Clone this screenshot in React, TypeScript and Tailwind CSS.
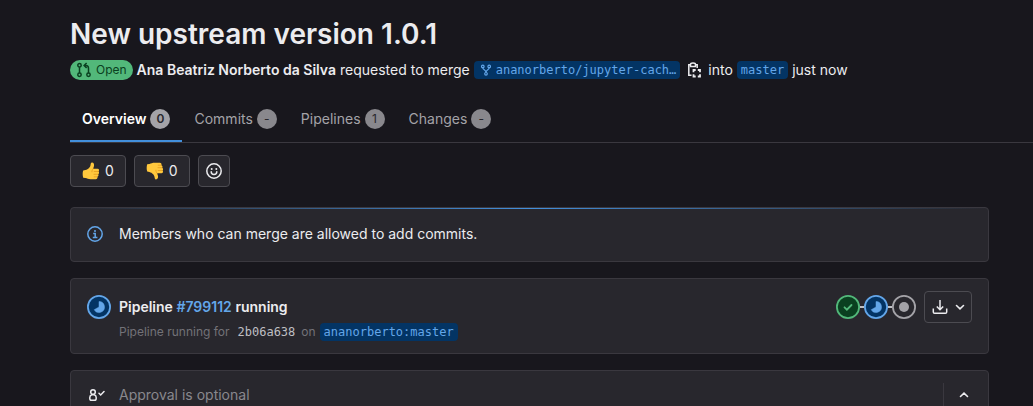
import type { ReactNode } from 'react';

type Tab = { label: string; count: string; active?: boolean };

const tabs: Tab[] = [
  { label: 'Overview', count: '0', active: true },
  { label: 'Commits', count: '-' },
  { label: 'Pipelines', count: '1' },
  { label: 'Changes', count: '-' },
];

function ThumbIcon({ down = false }: { down?: boolean }) {
  return (
    <svg viewBox="0 0 18 18" className={down ? 'size-[18px] -scale-y-100' : 'size-[18px]'} aria-hidden="true">
      <path
        d="M1.2 8.6C2.6 8.1 4.300 7.900 5.400 7.300C7 6.200 8.200 4.800 8.500 3.200C8.700 1.900 8.800.5 10 .5C11.700.5 12.300 2.200 12 3.900C11.800 5 11.300 6 11 6.800H15.600C17.300 6.800 17.600 9 16.300 9.500C17.500 10 17.300 12 16 12.300C16.900 13 16.500 14.600 15.300 14.800C15.900 15.800 15.200 17.200 13.800 17.200H8.500C6.500 17.200 5 16.500 3.500 16.100L1.200 15.800C.5 13.500.5 10.500 1.200 8.600Z"
        fill="#ffc83d"
      />
      <path
        d="M11 6.800C10.300 7.900 9.800 8.800 9.900 9.800M16.300 9.500H12.200M16 12.300H12M15.300 14.800H12.200"
        fill="none"
        stroke="#e39b1d"
        strokeWidth="0.8"
        strokeLinecap="round"
      />
    </svg>
  );
}

function SmileyIcon() {
  return (
    <svg viewBox="0 0 16 16" className="size-4" fill="none" stroke="currentColor" strokeWidth="1.5" aria-hidden="true">
      <circle cx="8" cy="8" r="7.200" />
      <path d="M5.200 8.800C5.200 12.400 10.800 12.400 10.800 8.800" strokeLinecap="round" />
      <circle cx="5.700" cy="5.900" r="1" fill="currentColor" stroke="none" />
      <circle cx="10.300" cy="5.900" r="1" fill="currentColor" stroke="none" />
    </svg>
  );
}

function MergeRequestIcon() {
  return (
    <svg viewBox="0 0 16 16" className="size-4" fill="none" stroke="currentColor" strokeWidth="1.5" aria-hidden="true">
      <circle cx="3.500" cy="3.200" r="1.700" />
      <circle cx="3.500" cy="12.800" r="1.700" />
      <circle cx="12.500" cy="12.800" r="1.700" />
      <path d="M3.500 5V11M12.500 11V6.500Q12.500 3.500 10 3.500H8.500M10.600 1L8.100 3.500L10.600 6" />
    </svg>
  );
}

function ForkIcon() {
  return (
    <svg viewBox="0 0 12 12" className="size-3" fill="none" stroke="currentColor" strokeWidth="1.200" aria-hidden="true">
      <circle cx="2.800" cy="2.400" r="1.300" />
      <circle cx="9.200" cy="2.400" r="1.300" />
      <circle cx="6" cy="9.800" r="1.300" />
      <path d="M2.800 3.700C2.800 6 6 5.400 6 8.500M9.200 3.700C9.200 6 6 5.400 6 8.500" />
    </svg>
  );
}

function CopyIcon() {
  return (
    <svg viewBox="0 0 16 16" className="size-4" fill="none" stroke="currentColor" strokeWidth="1.500" aria-hidden="true">
      <path d="M4.500 2.800H2.800V13.200H5.500M9.500 2.800H11.200V6" />
      <path d="M4.500 4.500V2.500Q4.500 1 7 1Q9.500 1 9.500 2.500V4.500Z" />
      <path d="M9.700 8H7.500V10.200M11.800 8H14V10.200M7.500 12.300V14.500H9.700M14 12.300V14.500H11.800" strokeWidth="1.800" />
    </svg>
  );
}

function InfoIcon() {
  return (
    <svg viewBox="0 0 16 16" className="size-4" fill="none" stroke="currentColor" strokeWidth="1.500" aria-hidden="true">
      <circle cx="8" cy="8" r="7.200" />
      <path d="M6.200 7.500H8.200V11.300M5.800 11.500H10.400" />
      <circle cx="8" cy="4.900" r="1" fill="currentColor" stroke="none" />
    </svg>
  );
}

function RunningIcon() {
  return (
    <svg viewBox="0 0 24 24" className="size-6" role="img" aria-label="Running">
      <circle cx="12" cy="12" r="11.100" fill="#033464" stroke="#63a6e9" strokeWidth="1.800" />
      <path d="M12 6.500A5.500 5.500 0 1 1 7.200 14.700L12 12Z" fill="#63a6e9" stroke="#63a6e9" strokeWidth="0.500" />
    </svg>
  );
}

function PassedIcon() {
  return (
    <svg viewBox="0 0 24 24" className="size-6" role="img" aria-label="Passed">
      <circle cx="12" cy="12" r="11.100" fill="#0a4020" stroke="#52b87a" strokeWidth="1.800" />
      <path d="M8.500 12.300L10.900 14.700L15.500 10" fill="none" stroke="#52b87a" strokeWidth="1.800" strokeLinecap="round" />
    </svg>
  );
}

function CreatedIcon() {
  return (
    <svg viewBox="0 0 24 24" className="size-6" role="img" aria-label="Created">
      <circle cx="12" cy="12" r="11.100" fill="#28272d" stroke="#a4a3a8" strokeWidth="1.800" />
      <circle cx="12" cy="12" r="5" fill="#a4a3a8" />
    </svg>
  );
}

function DownloadIcon() {
  return (
    <svg viewBox="0 0 16 16" className="size-4" fill="none" stroke="currentColor" strokeWidth="1.500" aria-hidden="true">
      <path d="M8 1V10.500M4.800 7.500L8 10.700L11.200 7.500M1.300 9.500V13Q1.300 14.300 2.600 14.300H13.400Q14.700 14.300 14.700 13V9.500" />
    </svg>
  );
}

function Chevron({ up = false }: { up?: boolean }) {
  return (
    <svg viewBox="0 0 16 16" className={up ? 'size-4 rotate-180' : 'size-4'} fill="none" stroke="currentColor" strokeWidth="1.600" aria-hidden="true">
      <path d="M4.500 6.500L8 9.800L11.500 6.500" strokeLinecap="round" />
    </svg>
  );
}

function ApprovalIcon() {
  return (
    <svg viewBox="0 0 16 16" className="size-4" fill="none" stroke="currentColor" strokeWidth="1.500" aria-hidden="true">
      <circle cx="4" cy="5" r="2.300" />
      <path d="M2.800 7.800Q.8 8.300.8 10.500V11.500Q.8 13.300 2.500 13.300H5.500Q7.200 13.300 7.200 11.500V10.500Q7.200 8.300 5.200 7.800Z" />
      <path d="M10 6.300L11.700 8L15 4.500" strokeLinecap="round" />
    </svg>
  );
}

function BranchLink({ children }: { children: ReactNode }) {
  return (
    <a
      href="#branch"
      className="flex items-center gap-1 rounded bg-[#033464] px-1 font-['DejaVu_Sans_Mono',monospace] text-xs leading-[18px] text-[#63a6e9]"
    >
      {children}
    </a>
  );
}

export default function App() {
  return (
    <main className="h-screen overflow-hidden bg-[#18171d] pt-4 pl-[70px] font-['Inter',sans-serif] text-sm leading-5 text-[#ececef]">
      <h1 className="text-[28px] leading-9 font-semibold">New upstream version 1.0.1</h1>

      <div className="mt-2 flex items-center gap-1">
        <span className="flex items-center gap-1 rounded-full bg-[#52b87a] px-1.5 text-xs leading-5 text-[#0a4020]">
          <MergeRequestIcon />
          Open
        </span>
        <a href="#author" className="font-semibold">
          Ana Beatriz Norberto da Silva
        </a>
        <span>requested to merge</span>
        <BranchLink>
          <span className="pl-0.5">
            <ForkIcon />
          </span>
          ananorberto/jupyter-cach…
        </BranchLink>
        <button type="button" aria-label="Copy branch name" className="mx-0.5">
          <CopyIcon />
        </button>
        <span>into</span>
        <BranchLink>master</BranchLink>
        <span>just now</span>
      </div>

      <nav className="mt-[18px] flex border-b border-[#3a383f]">
        {tabs.map((tab) => (
          <a
            key={tab.label}
            href={'#' + tab.label.toLowerCase()}
            className={
              tab.active
                ? 'flex h-11 items-center gap-1 border-b-2 border-[#428fdc] px-3 font-semibold text-white'
                : 'flex h-11 items-center gap-1 border-b-2 border-transparent px-3 text-[#a4a3a8]'
            }
          >
            {tab.label}
            <span
              className={
                tab.active
                  ? 'min-w-5 rounded-full bg-[#a4a3a8] text-center text-xs leading-5 text-[#28272d]'
                  : 'min-w-5 rounded-full bg-[#89888d] text-center text-xs leading-5 font-normal text-[#28272d]'
              }
            >
              {tab.count}
            </span>
          </a>
        ))}
      </nav>

      <div className="mt-3 flex gap-2">
        <button type="button" aria-label="Thumbs up" className="flex h-8 items-center gap-[5px] rounded border border-[#4c4b51] bg-[#28272d] px-[11px]">
          <ThumbIcon />
          <span>0</span>
        </button>
        <button type="button" aria-label="Thumbs down" className="flex h-8 items-center gap-[5px] rounded border border-[#4c4b51] bg-[#28272d] px-[11px]">
          <ThumbIcon down />
          <span>0</span>
        </button>
        <button type="button" aria-label="Add reaction" className="flex size-8 items-center justify-center rounded border border-[#4c4b51] bg-[#28272d]">
          <SmileyIcon />
        </button>
      </div>

      <div className="mr-11">
        <section className="relative mt-5 flex items-center rounded border border-[#3a383f] bg-[#28272d] px-4 pt-4 pb-[17px]">
          <div className="absolute inset-x-0 top-0 h-px bg-linear-to-r from-transparent via-[#428fdc] to-transparent" />
          <span className="w-8 text-[#63a6e9]">
            <InfoIcon />
          </span>
          <p>Members who can merge are allowed to add commits.</p>
        </section>

        <section className="mt-4 flex items-start rounded border border-[#3a383f] bg-[#28272d] px-4 pt-3 pb-3">
          <span className="mt-1 w-8">
            <RunningIcon />
          </span>
          <div className="flex-1 pt-1.5">
            <p className="font-semibold">
              Pipeline{' '}
              <a href="#pipeline" className="text-[#63a6e9]">
                #799112
              </a>{' '}
              running
            </p>
            <div className="mt-1.5 flex items-center gap-1 text-xs leading-[18px] text-[#737278]">
              <span>Pipeline running for</span>
              <a href="#commit" className="pr-0.5 pl-1 font-['DejaVu_Sans_Mono',monospace] text-[#bfbfc3]">
                2b06a638
              </a>
              <span>on</span>
              <BranchLink>ananorberto:master</BranchLink>
            </div>
          </div>
          <div className="flex items-center">
            <PassedIcon />
            <span className="h-0.5 w-1 bg-[#bfbfc3]" />
            <RunningIcon />
            <span className="h-0.5 w-1 bg-[#bfbfc3]" />
            <CreatedIcon />
            <button type="button" aria-label="Download artifacts" className="ml-2 flex h-8 items-center gap-1 rounded border border-[#4c4b51] pr-[3px] pl-[7px]">
              <DownloadIcon />
              <Chevron />
            </button>
          </div>
        </section>

        <section className="mt-4 flex items-center rounded-t border border-[#3a383f] bg-[#28272d] py-3 pr-4 pl-4">
          <span className="w-8 pl-0.5">
            <ApprovalIcon />
          </span>
          <p className="flex-1 text-[#89888d]">Approval is optional</p>
          <div className="flex h-6 items-center border-l border-[#3a383f] pl-3">
            <button type="button" aria-label="Collapse">
              <Chevron up />
            </button>
          </div>
        </section>
      </div>
    </main>
  );
}
